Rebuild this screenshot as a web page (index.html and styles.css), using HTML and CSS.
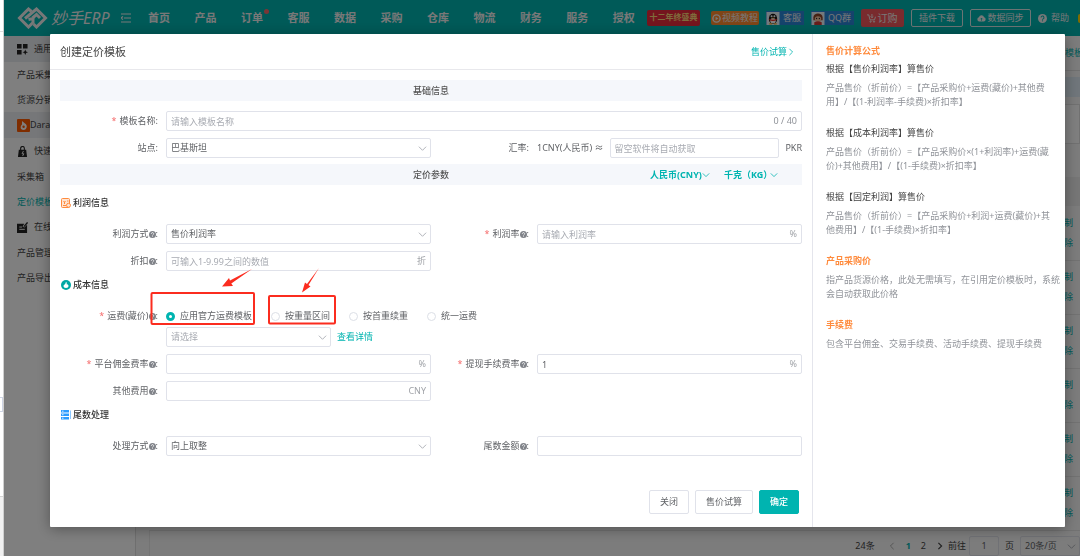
FILE: index.html
```html
<!DOCTYPE html>
<html lang="zh-CN">
<head>
<meta charset="utf-8">
<title>创建定价模板</title>
<link rel="stylesheet" href="styles.css">
</head>
<body>
<svg class="defs" aria-hidden="true">
  <symbol id="help" viewBox="0 0 16 16"><circle cx="8" cy="8" r="8" fill="currentColor"/><path d="M5.4 6.3a2.6 2.6 0 1 1 3.7 2.3c-.8.4-1.1.7-1.1 1.5" fill="none" stroke="var(--mark,#fff)" stroke-width="1.8"/><circle cx="8" cy="12.2" r="1.1" fill="var(--mark,#fff)"/></symbol>
  <symbol id="down" viewBox="0 0 10 10"><path d="M1 3l4 4 4-4" fill="none" stroke="currentColor"/></symbol>
</svg>

<div class="page">
  <header class="topbar">
    <div class="brand">
      <svg class="brand-mark" viewBox="0 0 31 22" fill="none" stroke="currentColor" stroke-width="3"><path d="M14.500 4.500 11.500 2 2.500 11l9 9 4.500-4.500V11.500l-4.500 1"/><path d="M8 11.500 19.500 2l9 9-9 9-3-3M23 11l-3.500-3.500-4 3.500"/></svg>
      <span class="brand-name">妙手ERP</span>
    </div>
    <button class="fold" aria-label="菜单"><svg viewBox="0 0 10 10" fill="none" stroke="currentColor" stroke-width="1.2"><path d="M0 1h10M3 5h7M0 9h10M2 3.500 0 5l2 1.500"/></svg></button>
    <nav class="nav">
      <a href="#">首页</a><a href="#">产品</a><a href="#" class="dot">订单</a><a href="#">客服</a><a href="#">数据</a><a href="#">采购</a><a href="#">仓库</a><a href="#">物流</a><a href="#">财务</a><a href="#">服务</a><a href="#">授权</a>
    </nav>
    <div class="tools">
      <a href="#" class="promo">十二年终盛典</a>
      <button class="video"><svg viewBox="0 0 10 10"><circle cx="5" cy="5" r="4" fill="none" stroke="currentColor" stroke-width="1.600"/><path d="M4 3l3 2-3 2z" fill="currentColor"/></svg>视频教程</button>
      <button class="qq"><svg viewBox="0 0 14 14"><path d="M0 0h14v14H0z" fill="#e8f4fb"/><ellipse cx="7" cy="7.500" rx="4.500" ry="5.500" fill="#151515"/><ellipse cx="7" cy="9.500" rx="3" ry="3" fill="#fff"/><circle cx="5.500" cy="4.500" r="1.100" fill="#fff"/><circle cx="8.500" cy="4.500" r="1.100" fill="#fff"/><path d="M3 7.300q4 2 8 0v1.400q-4 2-8 0z" fill="#f02b22"/><path d="M5 6.200h4L7 7.300zM3 12h3v1.500H3zM8 12h3v1.500H8z" fill="#f6a623"/></svg><span>客服</span></button>
      <button class="qq"><svg viewBox="0 0 14 14"><path d="M0 0h14v14H0z" fill="#e8f4fb"/><path d="M2 6c0-6 10-6 10 0v3H2z" fill="#8c4426"/><ellipse cx="7" cy="7.500" rx="3.500" ry="3" fill="#f3c5a0"/><circle cx="5.500" cy="7" r=".7" fill="#222"/><circle cx="8.500" cy="7" r=".7" fill="#222"/><path d="M3 11q4-2 8 0v3H3z" fill="#cf3b36"/></svg><span>QQ群</span></button>
      <button class="order"><svg viewBox="0 0 10 10" fill="none" stroke="currentColor"><path d="M0 1h2l1.300 5.500h5L9.500 3M5.500 0v4M4 2.700l1.500 1.500L7 2.700"/><circle cx="4" cy="8.500" r=".7"/><circle cx="7.800" cy="8.500" r=".7"/></svg>订购</button>
      <button class="ghost">插件下载</button>
      <button class="ghost sync"><svg viewBox="0 0 12 10"><path d="M3 9a3 3 0 0 1-.5-5.800 3.700 3.700 0 0 1 7 0A3 3 0 0 1 9 9z" fill="currentColor"/><path d="M6 8V4.500M4.500 6 6 4.500 7.500 6" fill="none" stroke="#00b4b0"/></svg>数据同步</button>
      <a href="#" class="helplink"><svg><use href="#help"/></svg>帮助</a>
      <span class="coin"></span>
    </div>
  </header>

  <div class="main">
    <aside class="side">
      <a href="#" class="head first"><svg viewBox="0 0 12 12" fill="currentColor"><path d="M0 0h5v5H0zM6.500 0h5v5h-5zM0 6.500h5v5H0zM9 6l.9 2.100L12 9l-2.100.9L9 12l-.9-2.100L6 9l2.100-.9z"/></svg>通用</a>
      <a href="#">产品采集</a>
      <a href="#">货源分销</a>
      <a href="#" class="head shop"><svg viewBox="0 0 13 13"><rect width="13" height="13" rx="1" fill="#ff5a00"/><path d="M5 2l3 2.500C11 6 10 11 6.500 11S3 7 5 5.500z" fill="#fff"/><circle cx="6.600" cy="7.800" r="1.200" fill="#ff5a00"/></svg>Daraz</a>
      <a href="#" class="head"><svg viewBox="0 0 12 12"><path d="M2 4h8l1 8H1z" fill="currentColor"/><path d="M4 5V2.500a2 2 0 0 1 4 0V5" fill="none" stroke="currentColor" stroke-width="1.200"/><path d="M7 5.500 5.500 8.500h2L6 11" fill="none" stroke="#fff"/></svg>快速</a>
      <a href="#">采集箱</a>
      <a href="#" class="on">定价模板</a>
      <a href="#" class="head"><svg viewBox="0 0 12 12"><path d="M0 2h8L6 5l2 1 3-3v9H0z" fill="currentColor"/><path d="M2.500 5.500h3M2.500 8h6" stroke="#fff"/><path d="M7.500 5 11.500.5" stroke="currentColor" stroke-width="1.500"/></svg>在线</a>
      <a href="#">产品管理</a>
      <a href="#">产品导出</a>
    </aside>
    <section class="content">
      <div class="tabs"><a href="#">定价模板</a></div>
      <div class="notice"></div>
      <div class="filter"></div>
      <table class="list">
        <thead><tr><th></th></tr></thead>
        <tbody>
          <tr><td><a href="#">复制</a><a href="#">删除</a></td></tr>
          <tr><td><a href="#">复制</a><a href="#">删除</a></td></tr>
          <tr><td><a href="#">复制</a><a href="#">删除</a></td></tr>
          <tr><td><a href="#">复制</a><a href="#">删除</a></td></tr>
          <tr><td><a href="#">复制</a><a href="#">删除</a></td></tr>
          <tr><td><a href="#">复制</a><a href="#">删除</a></td></tr>
        </tbody>
      </table>
      <div class="pager">
        <span class="total">24条</span>
        <button aria-label="上一页" class="muted"><svg viewBox="0 0 10 10"><path d="M7 1 3 5l4 4" fill="none" stroke="currentColor"/></svg></button>
        <button class="cur">1</button><button>2</button>
        <button aria-label="下一页"><svg viewBox="0 0 10 10"><path d="M3 1l4 4-4 4" fill="none" stroke="currentColor" stroke-width="1.500"/></svg></button>
        <label for="goto">前往</label><span class="goto"><input id="goto" value="1"></span><span>页</span>
        <span class="pick size"><select aria-label="每页条数"><option>20条/页</option></select><svg><use href="#down"/></svg></span>
      </div>
    </section>
  </div>
</div>
<div class="edge"><i class="edge-top"></i><i class="edge-box"></i><i class="edge-foot"></i></div>

<div class="mask">
  <div class="dialog" role="dialog" aria-labelledby="dlg-title">
    <form class="panel">
      <div class="title"><h1 id="dlg-title">创建定价模板</h1><a href="#">售价试算<svg viewBox="0 0 10 10"><path d="M3 1l4 4-4 4" fill="none" stroke="currentColor"/></svg></a></div>
      <div class="body">
        <div class="band"><h2>基础信息</h2></div>
        <div class="row wide lead">
          <label for="name"><b>*</b>模板名称:</label>
          <div class="field"><input id="name" placeholder="请输入模板名称"><span class="unit count">0 / 40</span></div>
        </div>
        <div class="row">
          <label for="site">站点:</label>
          <div class="field pick"><select id="site"><option>巴基斯坦</option></select><svg><use href="#down"/></svg></div>
          <label for="rate">汇率:</label>
          <div class="rate"><span>1CNY(人民币) ≈</span><input id="rate" placeholder="留空软件将自动获取"><span>PKR</span></div>
        </div>
        <div class="band params"><h2>定价参数</h2>
          <div class="units">
            <span class="pick money"><select aria-label="货币"><option>人民币(CNY)</option></select><svg><use href="#down"/></svg></span>
            <span class="pick weight"><select aria-label="重量单位"><option>千克（KG）</option></select><svg><use href="#down"/></svg></span>
          </div>
        </div>

        <h3><svg viewBox="0 0 10 10" fill="none" stroke="#ff8b3d"><rect x=".5" y=".5" width="8" height="9" rx="1" fill="#ffe5d3"/><path d="M2.500 3l1 1.300L4.500 3M3.500 4v2M2 7.500h3M6 3h1.500"/><circle cx="7.500" cy="7.300" r="2" fill="#ffe5d3"/></svg>利润信息</h3>
        <div class="row start">
          <label for="mode">利润方式<svg><use href="#help"/></svg>:</label>
          <div class="field pick"><select id="mode"><option>售价利润率</option></select><svg><use href="#down"/></svg></div>
          <label for="profit"><b>*</b>利润率<svg><use href="#help"/></svg>:</label>
          <div class="field"><input id="profit" placeholder="请输入利润率"><span class="unit">%</span></div>
        </div>
        <div class="row">
          <label for="discount">折扣<svg><use href="#help"/></svg>:</label>
          <div class="field"><input id="discount" placeholder="可输入1-9.99之间的数值"><span class="unit">折</span></div>
        </div>

        <h3><svg viewBox="0 0 10 10"><circle cx="5" cy="5" r="5" fill="#00a8a4"/><path d="M5 1.800c1 1 1 1.700.5 2.400 1-.1 2 .5 2 1.800 0 1.200-1 2-2.500 2S2.500 7.200 2.500 6 4 4.600 4.300 3.800z" fill="#fff"/></svg>成本信息</h3>
        <div class="row wide start">
          <label for="r1"><b>*</b>运费(藏价)<svg><use href="#help"/></svg>:</label>
          <div class="radios">
            <label><input type="radio" name="ship" id="r1" checked>应用官方运费模板</label>
            <label><input type="radio" name="ship">按重量区间</label>
            <label><input type="radio" name="ship">按首重续重</label>
            <label><input type="radio" name="ship">统一运费</label>
          </div>
        </div>
        <div class="row wide tight">
          <span></span>
          <div class="tpl"><span class="pick"><select aria-label="运费模板" class="empty"><option>请选择</option></select><svg><use href="#down"/></svg></span><a href="#">查看详情</a></div>
        </div>
        <div class="row">
          <label for="fee"><b>*</b>平台佣金费率<svg><use href="#help"/></svg>:</label>
          <div class="field"><input id="fee"><span class="unit">%</span></div>
          <label for="cash"><b>*</b>提现手续费率<svg><use href="#help"/></svg>:</label>
          <div class="field"><input id="cash" value="1"><span class="unit">%</span></div>
        </div>
        <div class="row">
          <label for="other">其他费用<svg><use href="#help"/></svg>:</label>
          <div class="field"><input id="other"><span class="unit">CNY</span></div>
        </div>

        <h3><svg viewBox="0 0 10 10"><path d="M0 0h8v2.500H0zM0 3.500h8V6H0zM0 7h8v2.500H0z" fill="#2d9cff"/><path d="M9.500.5v8.500" stroke="#8cc8ff"/><path d="M1 1.200h1.500M1 4.700h1.500M1 8.200h1.500" stroke="#fff" stroke-width=".8"/></svg>尾数处理</h3>
        <div class="row start">
          <label for="round">处理方式<svg><use href="#help"/></svg>:</label>
          <div class="field pick"><select id="round"><option>向上取整</option></select><svg><use href="#down"/></svg></div>
          <label for="tail">尾数金额<svg><use href="#help"/></svg>:</label>
          <div class="field"><input id="tail"></div>
        </div>
        <div class="actions"><button type="button">关闭</button><button type="button">售价试算</button><button type="button" class="primary">确定</button></div>
      </div>
      <svg class="marks" viewBox="0 0 190 60" fill="none" stroke="#fb2c1f" stroke-width="2" aria-hidden="true">
        <rect x="1.500" y="25" width="102.500" height="31" rx="1"/><rect x="119" y="28" width="66" height="27.500" rx="1"/>
        <path d="M102 1 80 12.500l-1-2.500-7 8.500 11-.5-1.700-2.500zM169 0l-12 16-2-1.500-3 10 8.500-6-2-1.500z" fill="#fb2c1f" stroke="none"/>
      </svg>
    </form>
    <aside class="guide">
      <h2>售价计算公式</h2>
      <h3>根据【售价利润率】算售价</h3>
      <p>产品售价（折前价）=【产品采购价+运费(藏价)+其他费<br>用】/【(1-利润率-手续费)×折扣率】</p>
      <h3>根据【成本利润率】算售价</h3>
      <p>产品售价（折前价）=【产品采购价×(1+利润率)+运费(藏<br>价)+其他费用】/【(1-手续费)×折扣率】</p>
      <h3>根据【固定利润】算售价</h3>
      <p>产品售价（折前价）=【产品采购价+利润+运费(藏价)+其<br>他费用】/【(1-手续费)×折扣率】</p>
      <h2>产品采购价</h2>
      <p>指产品货源价格，此处无需填写，在引用定价模板时，系统<br>会自动获取此价格</p>
      <h2>手续费</h2>
      <p>包含平台佣金、交易手续费、活动手续费、提现手续费</p>
    </aside>
  </div>
</div>
</body>
</html>
```

FILE: styles.css
```css
:root { --teal: #00b4b0; --line: #e0e2ea; --orange: #ff8b3d; }
* { box-sizing: border-box; }
body { margin: 0; overflow: hidden; color: #606266; }
body, button, input, select { font: 9px/14px "Noto Sans", "Noto Sans CJK SC", sans-serif; }
h1, h2, h3, p { margin: 0; font-size: 9px; }
a { color: var(--teal); text-decoration: none; white-space: nowrap; }
button { padding: 0; border: 0; background: none; color: inherit; white-space: nowrap; }
.defs { position: absolute; width: 0; height: 0; }

/* page */
.page { display: flex; flex-direction: column; height: 100vh; margin-left: 4px; background: #fff; }
.topbar { display: flex; flex: none; align-items: center; height: 36px; padding-left: 13px; background: var(--teal); color: #f0f0f0; }
.topbar a { color: #f0f0f0; }
.brand { display: flex; align-items: center; gap: 3px; width: 104px; }
.brand-mark { width: 31px; height: 22px; flex: none; }
.brand-name { font-size: 16px; line-height: 24px; font-style: italic; white-space: nowrap; }
.fold { width: 10px; height: 10px; }
.fold svg { display: block; width: 10px; height: 10px; }
.nav { display: flex; flex: 1; justify-content: space-between; padding: 0 12px 0 17px; }
.nav a { position: relative; font-size: 11px; font-weight: bold; }
.dot::after { content: ""; position: absolute; top: -2px; right: -6px; width: 5px; height: 5px; border-radius: 50%; background: #f56c6c; }
.tools { display: flex; flex: none; align-items: center; gap: 7px; }
.tools svg { flex: none; width: 9px; height: 9px; }
.tools button { display: flex; align-items: center; justify-content: center; gap: 1px; }
.tools .promo { width: 53px; height: 16px; border-radius: 2px; background: #e82b3c; color: #ffd978; font-weight: bold; font-size: 8px; text-align: center; margin-right: 4px; }
.tools .video { width: 48px; height: 14px; border-radius: 2px; background: #ff8b2e; }
.tools .qq { height: 14px; background: #2a86d8; gap: 0; }
.tools .qq svg { width: 14px; height: 13px; }
.tools .qq span { padding: 0 3px; }
.tools .order { width: 43px; height: 18px; border-radius: 2px; background: #f2575c; font-size: 10px; }
.tools .ghost { width: 52px; height: 18px; border: 1px solid #d8e8e8; border-radius: 2px; }
.tools .sync { width: 61px; }
.helplink { display: flex; align-items: center; gap: 4px; --mark: var(--teal); }
.coin { width: 2px; height: 9px; margin-left: 2px; border-radius: 5px 0 0 5px; background: #ffd700; }

.main { display: flex; flex: 1; min-height: 0; }
.side { width: 132px; flex: none; border-right: 1px solid #dedede; }
.side a { display: flex; align-items: center; gap: 6px; height: 25px; padding-left: 13px; color: #444; }
.side .head { height: 26px; }
.side .first { background: #e9ecf0; }
.side .shop { gap: 0; background: #edeff2; }
.side svg { width: 11px; height: 11px; color: #222; }
.side .shop svg { width: 13px; height: 13px; }
.side .on { color: var(--teal); }
.content { flex: 1; min-width: 0; display: flex; flex-direction: column; padding-left: 13px; background: #f8f8f8; }
.tabs { flex: none; display: flex; justify-content: flex-end; height: 35px; padding-top: 10px; border-bottom: 1px solid #e0e0e0; overflow: hidden; }
.tabs a { margin-right: -3px; }
.notice { flex: none; height: 20px; margin-top: 6px; background: #e0edf6; }
.filter { flex: none; height: 40px; margin: 7px 0 33px; border: 1px solid #e2e2e2; background: #fff; }
.list { flex: none; width: 100%; border-collapse: collapse; }
.list th { height: 29px; padding: 0; background: #ededed; }
.list td { height: 54px; padding: 0 7px 0 0; border-bottom: 1px solid #e4e4e4; }
.list td a { display: block; line-height: 20px; text-align: right; }
.pager { flex: 1; display: flex; align-items: center; justify-content: flex-end; gap: 6px; padding-top: 5px; border-left: 1px solid #e8e8e8; color: #444; white-space: nowrap; }
.pager button { margin-right: 4px; }
.pager button svg { display: block; width: 8px; height: 8px; }
.pager .total { margin-right: 7px; }
.pager .muted { color: #999; }
.pager .cur { color: var(--teal); font-weight: bold; }
.pager button:nth-of-type(4) { margin: 0 -2px 0 0; }
.pager label { margin-right: -3px; }
.goto { width: 30px; }
.goto input:not([type]) { text-align: center; }
.pager .size { width: 60px; }

/* strip left of the application frame */
.edge { position: fixed; inset: 0 auto 0 0; width: 4px; display: flex; flex-direction: column; background: #fff; border-right: 1px solid #d0d0d0; }
.edge-top { height: 32px; border-bottom: 1px solid #ddd; }
.edge-box { height: 15px; margin-top: 365px; border: 1px solid #cfd5e4; border-left: 0; }
.edge-foot { flex: 1; margin-top: 84px; background: #f1f1f1; border-top: 1px solid #d5d5d5; }

/* dialog */
.mask { position: fixed; inset: 0 0 0 4px; padding: 34px 15px 0 46px; background: rgba(0, 0, 0, .5); }
.dialog { display: flex; border-radius: 1px; background: #fff; box-shadow: 0 2px 14px rgba(0, 0, 0, .35); }
.panel { position: relative; flex: 1; min-width: 0; }
.title { display: flex; align-items: center; justify-content: space-between; height: 36px; padding: 0 17px 0 10px; border-bottom: 1px solid #e8e8ec; }
.title h1 { font-size: 11px; font-weight: normal; color: #444; }
.title a { display: flex; align-items: center; }
.title svg { width: 8px; height: 8px; }
.body { padding: 10px 10px 13px; }
.band { display: grid; grid-template-columns: 1fr auto 1fr; align-items: center; height: 21px; background: #f5f7fb; }
.band h2 { grid-column: 2; color: #555; font-weight: 500; }
.params { margin: 6px 0 9px; }
.units { display: flex; justify-content: flex-end; gap: 14px; padding-right: 24px; }
.money { width: 60px; }
.weight { width: 54px; }
.body h3 { display: flex; align-items: center; gap: 2px; height: 18px; margin-top: 5px; padding-left: 1px; color: #333; font-weight: 500; }
.body h3 svg { width: 10px; height: 10px; }
.row { display: grid; grid-template-columns: 98px 1fr 90px 1fr; column-gap: 8px; align-items: center; margin-top: 7px; }
.wide { grid-template-columns: 98px 1fr; }
.lead { margin-top: 10px; }
.start { margin-top: 12px; }
.tight { margin-top: 1px; }
.row > label { display: flex; align-items: center; justify-content: flex-end; white-space: nowrap; }
.row > label b { margin-right: 3px; color: #f56c6c; font-weight: normal; }
.row > label svg { flex: none; width: 7px; height: 7px; color: #808389; }
.field, .pick { position: relative; display: block; min-width: 0; }
input:not([type]), select { display: block; width: 100%; height: 20px; padding: 0 4px; border: 1px solid var(--line); border-radius: 2px; background: transparent; color: #606266; appearance: none; outline: 0; }
.units select { height: 14px; padding: 0; border: 0; color: var(--teal); font-weight: bold; }
input::placeholder { color: #a8abb2; opacity: 1; }
select.empty { color: #a8abb2; }
.pick > svg { position: absolute; right: 4px; top: 50%; width: 9px; height: 9px; margin-top: -4px; color: #a8abb2; pointer-events: none; }
.units .pick > svg { right: 0; width: 8px; height: 8px; color: var(--teal); }
.unit { position: absolute; right: 5px; top: 3px; color: #a0a3a8; }
.count { color: #909399; }
.rate, .tpl { display: flex; align-items: center; gap: 6px; white-space: nowrap; }
.rate input { flex: 1; min-width: 0; }
.tpl .pick { width: 165px; }
.radios { display: flex; gap: 19px; height: 20px; }
.radios label { display: flex; align-items: center; gap: 5px; white-space: nowrap; }
.radios input { appearance: none; width: 9px; height: 9px; margin: 0; border: 1px solid #dcdfe6; border-radius: 50%; background: #fff; }
.radios input:checked { border: 3px solid var(--teal); }
.actions { display: flex; justify-content: flex-end; gap: 6px; margin-top: 34px; padding-right: 3px; }
.actions button { height: 24px; padding: 0 10px; border: 1px solid var(--line); border-radius: 2px; }
.actions .primary { border-color: var(--teal); background: var(--teal); color: #fff; font-weight: 500; }
.marks { position: absolute; left: 100px; top: 234px; width: 190px; height: 60px; pointer-events: none; }
.guide { flex: none; width: 253px; padding: 8px 0 0 13px; border-left: 1px solid #e4e5ec; white-space: nowrap; }
.guide h2 { line-height: 18px; color: var(--orange); font-weight: bold; }
.guide h3 { line-height: 18px; color: #444; font-weight: normal; }
.guide p { margin-top: 3px; color: #909399; }
.guide p + h2, .guide p + h3 { margin-top: 15px; }
```
